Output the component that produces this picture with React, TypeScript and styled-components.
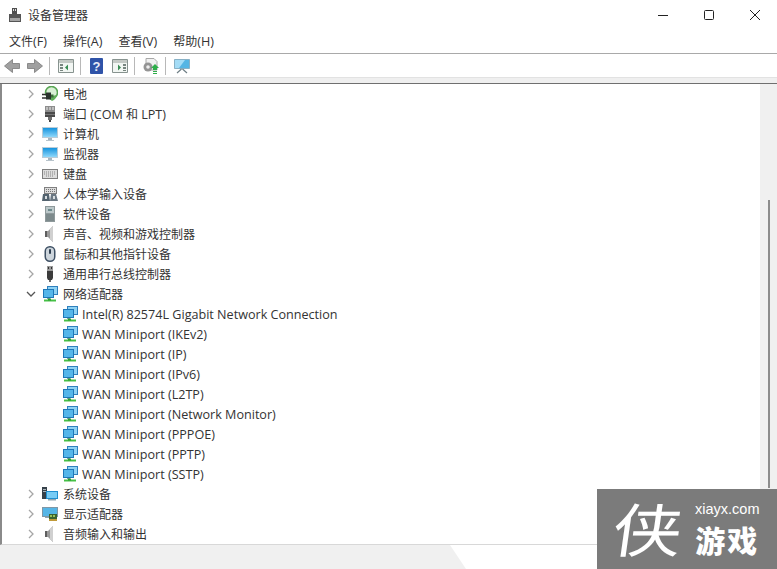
import React from "react";
import styled, { createGlobalStyle } from "styled-components";

const GlobalStyle = createGlobalStyle`
  html, body {
    margin: 0;
    padding: 0;
    background: #fff;
    overflow: hidden;
  }
  * {
    box-sizing: border-box;
  }
`;

const FONT = `"Open Sans", "Noto Sans CJK SC", sans-serif`;

const Window = styled.div`
  position: relative;
  width: 777px;
  height: 569px;
  display: flex;
  flex-direction: column;
  overflow: hidden;
  background: #fff;
  color: #2b2b2b;
  font-family: ${FONT};
  font-size: 12px;
`;

const TitleBar = styled.div`
  height: 29px;
  display: flex;
  align-items: center;
  padding-left: 7px;
`;

const TitleText = styled.span`
  margin-left: 5px;
  font-size: 12px;
  color: #333;
`;

const WindowButtons = styled.div`
  margin-left: auto;
  margin-right: -1px;
  display: flex;
`;

const WindowButton = styled.div`
  width: 46px;
  height: 29px;
  display: flex;
  align-items: center;
  justify-content: center;
`;

const MenuBar = styled.div`
  height: 25px;
  display: flex;
  align-items: center;
  padding-left: 9px;
  gap: 16px;
  border-bottom: 1px solid #a9a9a9;
  font-size: 12px;
  color: #333;
`;

const Latin = styled.span`
  font-size: 12.6px;
`;

const ToolBar = styled.div`
  height: 23px;
  display: flex;
  align-items: center;
`;

const ToolButton = styled.div`
  width: 23px;
  height: 23px;
  display: flex;
  align-items: center;
  justify-content: center;
`;

const ToolDivider = styled.div`
  width: 1px;
  height: 18px;
  margin: 0 4px 0 3px;
  background: #b8b8b8;
`;

const Band = styled.div`
  height: 7px;
  background: #efefef;
  border-top: 1px solid #e2e2e2;
  border-bottom: 1px solid #6f6f6f;
`;

const Body = styled.div`
  height: 461px;
  display: flex;
  border-left: 2px solid #8a8a8a;
  border-bottom: 1px solid #d8d8d8;
`;

const Tree = styled.div`
  flex: 1;
  overflow: hidden;
`;

const Row = styled.div<{ $depth: number }>`
  height: 20px;
  display: flex;
  align-items: center;
  padding-left: ${(p) => (p.$depth === 1 ? 60 : 22)}px;
  white-space: nowrap;
  font-size: ${(p) => (p.$depth === 1 ? 12.6 : 12)}px;
  color: #333;
`;

const Twisty = styled.div`
  width: 13px;
  height: 20px;
  margin-right: 5px;
  display: flex;
  align-items: center;
  justify-content: center;
`;

const RowIcon = styled.div<{ $depth: number }>`
  width: 16px;
  height: 16px;
  margin-right: ${(p) => (p.$depth === 1 ? 4 : 5)}px;
  flex: none;
`;

const ScrollTrack = styled.div`
  width: 17px;
  background: #f0f0f0;
  display: flex;
  flex-direction: column;
  align-items: center;
  padding-top: 116px;
`;

const ScrollThumb = styled.div`
  width: 2px;
  height: 288px;
  background: #8c8c8c;
`;

const StatusBar = styled.div`
  flex: 1;
  background: #f0f0f0;
`;

const Notch = styled.div`
  position: absolute;
  left: 450px;
  bottom: 0;
  width: 150px;
  height: 24px;
  background: #fff;
  clip-path: polygon(0 0, 100% 0, 100% 100%, 16px 100%);
`;

const Watermark = styled.div`
  position: absolute;
  right: 0;
  bottom: 0;
  width: 180px;
  height: 80px;
  background: #7b7b7b;
  color: #fff;
  display: flex;
  align-items: center;
  padding-left: 24px;
`;

const MarkGlyph = styled.span`
  font-family: "Noto Sans CJK SC", sans-serif;
  font-size: 54px;
  font-weight: 400;
  line-height: 1;
  transform: translateY(-1.5px) skewX(-8deg) scale(1.28, 1.07);
`;

const MarkColumn = styled.div`
  margin: -3px 0 0 20px;
  display: flex;
  flex-direction: column;
  align-items: center;
  gap: 6px;
`;

const MarkSite = styled.span`
  font-family: "Liberation Sans", sans-serif;
  font-size: 14.5px;
  line-height: 16px;
`;

const MarkName = styled.span`
  font-family: "Noto Sans CJK SC", sans-serif;
  font-size: 30px;
  font-weight: 900;
  letter-spacing: 2px;
  line-height: 32px;
`;

const Chevron = ({ open }: { open?: boolean }) => (
  <svg width="10" height="10" viewBox="0 0 10 10" fill="none" stroke={open ? "#555" : "#a6a6a6"} strokeWidth="1.3">
    {open ? <path d="M1 3 L5 7 L9 3" /> : <path d="M3 1 L7 5 L3 9" />}
  </svg>
);

const Svg = ({ children, size = 16 }: { children: React.ReactNode; size?: number }) => (
  <svg width={size} height={size} viewBox="0 0 16 16" style={{ display: "block" }}>
    {children}
  </svg>
);

const DeviceManagerIcon = () => (
  <Svg>
    <path d="M5 1h5v6H5z" fill="#4f4f4f" />
    <path d="M6 2h1v2H6zM8 2h1v2H8z" fill="#ddd" />
    <path d="M2 7h12v8H2z" fill="#555" />
    <path d="M3 11h10v3H3z" fill="#a3a3a3" />
  </Svg>
);

const BatteryIcon = () => (
  <Svg>
    <circle cx="9.5" cy="6.5" r="6" fill="#d9efd5" stroke="#58a553" strokeWidth="1.6" />
    <path d="M5 11l5 4c3-1 4-3 5-6-3 1-7 1-10 2z" fill="#5fae58" />
    <path d="M0 8.5h5M0 12h5" stroke="#2f2f2f" strokeWidth="1.4" />
    <path d="M4 6.5h5v7H4z" fill="#2b332e" />
    <path d="M9 8.5h2.5v3H9z" fill="#3f6f3b" />
  </Svg>
);

const PortIcon = () => (
  <Svg>
    <path d="M3 0h10v6H3z" fill="#8d8d8d" />
    <path d="M4.5 1h1v3h-1zM7.5 1h1v3h-1zM10.5 1h1v3h-1z" fill="#f0f0f0" />
    <path d="M3 6h10v5H3z" fill="#4a4a4a" />
    <path d="M3 8h10v1H3z" fill="#777" />
    <path d="M6 11h4v3H6z" fill="#6f6f6f" />
    <path d="M7 14h2v2H7z" fill="#444" />
  </Svg>
);

const MonitorIcon = () => (
  <Svg>
    <defs>
      <linearGradient id="scr" x1="0" y1="0" x2="0" y2="1">
        <stop offset="0" stopColor="#1593de" />
        <stop offset="1" stopColor="#8fd8fa" />
      </linearGradient>
    </defs>
    <path d="M0 1h16v11H0z" fill="#b9ccd8" />
    <path d="M1 2h14v9H1z" fill="url(#scr)" />
    <path d="M6 12h4v2H6z" fill="#a5b6c0" />
    <path d="M4 14h8v1H4z" fill="#b7c3cb" />
  </Svg>
);

const KeyboardIcon = () => (
  <Svg>
    <path d="M0 3h16v10H0z" fill="#7f7f7f" />
    <path d="M1 4h14v8H1z" fill="#dcdcdc" />
    <path d="M2 6h12M2 8h12M4 10h8" stroke="#858585" strokeWidth="1" strokeDasharray="1 1" />
  </Svg>
);

const HidIcon = () => (
  <Svg>
    <path d="M2 1h13v7H2z" fill="#808080" />
    <path d="M3 2h11v5H3z" fill="#dcdcdc" />
    <path d="M4 3.5h9M4 5.5h9" stroke="#767676" strokeDasharray="1 1" />
    <path d="M1 8h6l1 7H0z" fill="#53636f" />
    <path d="M9 8h5l2 7H8z" fill="#6b7883" />
    <path d="M3 10h2v3H3zM11 10h2v3h-2z" fill="#d8dde0" />
  </Svg>
);

const SoftwareIcon = () => (
  <Svg>
    <path d="M3 0h10v16H3z" fill="#8e999b" />
    <path d="M4 1h8v6H4z" fill="#bcc8ca" />
    <path d="M6 3h4v2H6z" fill="#6d8a8c" />
    <path d="M4 8h8v7H4z" fill="#7d8a8c" />
  </Svg>
);

const SpeakerIcon = () => (
  <Svg>
    <path d="M3 5h3l5-5v16l-5-5H3z" fill="#9a9a9a" />
    <path d="M8 3l3-3v16l-3-3z" fill="#d0d0d0" />
    <path d="M3 5h2v6H3z" fill="#5f5f5f" />
  </Svg>
);

const MouseIcon = () => (
  <Svg>
    <rect x="3.25" y="0.75" width="9.5" height="14.5" rx="4.5" fill="#cdd5dc" stroke="#3e5064" strokeWidth="1.5" />
    <rect x="7" y="3" width="2" height="5" rx="1" fill="#2f4052" />
  </Svg>
);

const UsbIcon = () => (
  <Svg>
    <path d="M5 0h6v5H5z" fill="#9a9a9a" />
    <path d="M6 1h1v2H6zM9 1h1v2H9z" fill="#333" />
    <path d="M5 5h6v7l-1 2H6l-1-2z" fill="#3c3c3c" />
    <path d="M7 14h2v2H7z" fill="#666" />
  </Svg>
);

const NetworkIcon = () => (
  <Svg>
    <path d="M5 0h11v9H5z" fill="#2f80bd" />
    <path d="M6 1h9v7H6z" fill="#8ed2f4" />
    <path d="M1 3h11v9H1z" fill="#1f78b8" />
    <path d="M2 4h9v7H2z" fill="#55b6ea" />
    <path d="M5 12h3v1H5z" fill="#7f9aa8" />
    <path d="M2 13.5h12v2H2z" fill="#46c046" />
    <path d="M6 12.5h3v2H6z" fill="#2a9a35" />
  </Svg>
);

const SystemIcon = () => (
  <Svg>
    <path d="M0 1h5v12H0z" fill="#36414a" />
    <path d="M1 3h3v1H1zM1 5h3v1H1z" fill="#aab4ba" />
    <path d="M4 5h12v8H4z" fill="#1f8fd0" />
    <path d="M5 6h10v6H5z" fill="#78ccf5" />
    <path d="M6 13h8v1.5H6z" fill="#8fa5b0" />
  </Svg>
);

const DisplayIcon = () => (
  <Svg>
    <path d="M0 1h16v10H0z" fill="#7f97a6" />
    <path d="M1 2h14v8H1z" fill="#55b5e6" />
    <path d="M3 11h9v1H3z" fill="#8fa5b0" />
    <path d="M7 8h8v7H7z" fill="#3a6330" />
    <path d="M8 9h2v2H8zM11 9h2v2h-2z" fill="#98c05a" />
    <path d="M7 13h8v2H7z" fill="#c09a3a" />
  </Svg>
);

const Arrow = ({ flip }: { flip?: boolean }) => (
  <Svg>
    <path
      d={flip ? "M0.5 5.5h7V1.5L15.5 8l-8 6.5v-4h-7z" : "M15.5 5.5h-7V1.5L0.5 8l8 6.5v-4h7z"}
      fill="#a0a0a0"
      stroke="#7a7a7a"
      strokeWidth="0.8"
    />
  </Svg>
);

const PaneIcon = ({ right }: { right?: boolean }) => (
  <Svg>
    <path d="M0.5 1.5h15v13h-15z" fill="#f2f6f3" stroke="#87938f" />
    <path d="M1 2h14v3H1z" fill="#c4c9c5" />
    <path d={right ? "M11 6h3v2h-3zM11 9h3v2h-3zM11 12h3v1h-3z" : "M2 6h3v2H2zM2 9h3v2H2zM2 12h3v1H2z"} fill="#77857f" />
    <path d={right ? "M6 6.5l3 3-3 3z" : "M10 6.5l-3 3 3 3z"} fill="#3a8d54" />
  </Svg>
);

const HelpIcon = () => (
  <svg width="13" height="16" viewBox="0 0 13 16" style={{ display: "block" }}>
    <rect width="13" height="16" rx="1" fill="#2f53a8" />
    <text x="6.5" y="13" textAnchor="middle" fontSize="13" fontWeight="700" fill="#e8ecf8" fontFamily="Liberation Sans">?</text>
  </svg>
);

const UpdateIcon = () => (
  <Svg>
    <path d="M3 0.5h8l3 3V12H3z" fill="#f1f1f1" stroke="#a8a8a8" />
    <circle cx="5" cy="9" r="4.5" fill="#949494" />
    <circle cx="5" cy="9" r="1.8" fill="#eee" />
    <path d="M12 6l4 4h-2v2h-4v-2H8z" fill="#2fae4a" />
    <path d="M10 13h4v1h-4zM10 15h4v1h-4z" fill="#2fae4a" />
  </Svg>
);

const ScanIcon = () => (
  <Svg>
    <path d="M0.5 1.5h15v9h-15z" fill="#55b5e4" stroke="#7fa6ba" strokeWidth="0.8" />
    <path d="M1 2h10L5 10H1z" fill="#a4dcf6" />
    <path d="M7.5 11L3 15M8.5 11l4.5 4" stroke="#6f7f86" strokeWidth="1.2" />
  </Svg>
);

type TreeItem = {
  label: React.ReactNode;
  icon: React.ReactNode;
  depth?: number;
  open?: boolean;
};

const child = (label: string): TreeItem => ({ label, icon: <NetworkIcon />, depth: 1 });

const items: TreeItem[] = [
  { label: "电池", icon: <BatteryIcon /> },
  { label: <>端口 <Latin>(COM</Latin> 和 <Latin>LPT)</Latin></>, icon: <PortIcon /> },
  { label: "计算机", icon: <MonitorIcon /> },
  { label: "监视器", icon: <MonitorIcon /> },
  { label: "键盘", icon: <KeyboardIcon /> },
  { label: "人体学输入设备", icon: <HidIcon /> },
  { label: "软件设备", icon: <SoftwareIcon /> },
  { label: "声音、视频和游戏控制器", icon: <SpeakerIcon /> },
  { label: "鼠标和其他指针设备", icon: <MouseIcon /> },
  { label: "通用串行总线控制器", icon: <UsbIcon /> },
  { label: "网络适配器", icon: <NetworkIcon />, open: true },
  child("Intel(R) 82574L Gigabit Network Connection"),
  child("WAN Miniport (IKEv2)"),
  child("WAN Miniport (IP)"),
  child("WAN Miniport (IPv6)"),
  child("WAN Miniport (L2TP)"),
  child("WAN Miniport (Network Monitor)"),
  child("WAN Miniport (PPPOE)"),
  child("WAN Miniport (PPTP)"),
  child("WAN Miniport (SSTP)"),
  { label: "系统设备", icon: <SystemIcon /> },
  { label: "显示适配器", icon: <DisplayIcon /> },
  { label: "音频输入和输出", icon: <SpeakerIcon /> },
];

const App: React.FC = () => {
  return (
    <Window>
      <GlobalStyle />
      <TitleBar>
        <DeviceManagerIcon />
        <TitleText>设备管理器</TitleText>
        <WindowButtons>
          <WindowButton>
            <svg width="12" height="12" viewBox="0 0 12 12">
              <path d="M1 6.5h10" stroke="#222" />
            </svg>
          </WindowButton>
          <WindowButton>
            <svg width="12" height="12" viewBox="0 0 12 12" fill="none">
              <rect x="1.5" y="1.5" width="9" height="9" rx="1" stroke="#222" />
            </svg>
          </WindowButton>
          <WindowButton>
            <svg width="12" height="12" viewBox="0 0 12 12" fill="none">
              <path d="M1 1l10 10M11 1L1 11" stroke="#222" />
            </svg>
          </WindowButton>
        </WindowButtons>
      </TitleBar>
      <MenuBar>
        <span>文件<Latin>(F)</Latin></span>
        <span>操作<Latin>(A)</Latin></span>
        <span>查看<Latin>(V)</Latin></span>
        <span>帮助<Latin>(H)</Latin></span>
      </MenuBar>
      <ToolBar>
        <ToolButton><Arrow /></ToolButton>
        <ToolButton><Arrow flip /></ToolButton>
        <ToolDivider />
        <ToolButton><PaneIcon /></ToolButton>
        <ToolDivider />
        <ToolButton><HelpIcon /></ToolButton>
        <ToolButton><PaneIcon right /></ToolButton>
        <ToolDivider />
        <ToolButton><UpdateIcon /></ToolButton>
        <ToolDivider />
        <ToolButton><ScanIcon /></ToolButton>
      </ToolBar>
      <Band />
      <Body>
        <Tree>
          {items.map((item, i) => (
            <Row key={i} $depth={item.depth ?? 0}>
              {!item.depth && (
                <Twisty>
                  <Chevron open={item.open} />
                </Twisty>
              )}
              <RowIcon $depth={item.depth ?? 0}>{item.icon}</RowIcon>
              <span>{item.label}</span>
            </Row>
          ))}
        </Tree>
        <ScrollTrack>
          <ScrollThumb />
        </ScrollTrack>
      </Body>
      <StatusBar />
      <Notch />
      <Watermark>
        <MarkGlyph>侠</MarkGlyph>
        <MarkColumn>
          <MarkSite>xiayx.com</MarkSite>
          <MarkName>游戏</MarkName>
        </MarkColumn>
      </Watermark>
    </Window>
  );
};

export default App;
